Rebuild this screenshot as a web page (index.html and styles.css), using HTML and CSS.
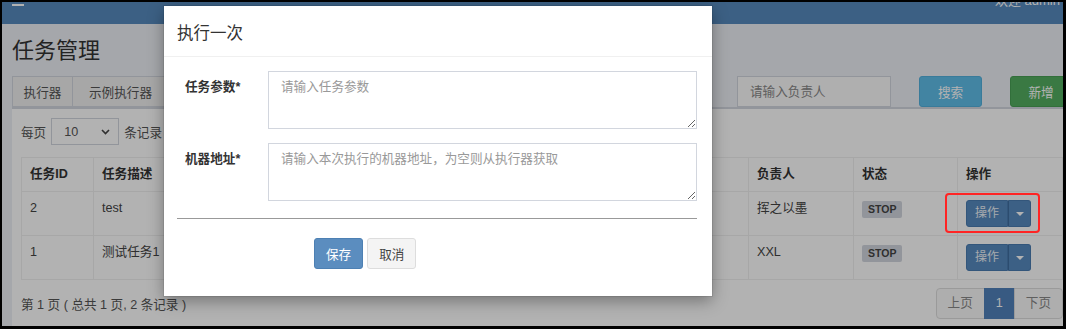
FILE: index.html
```html
<!DOCTYPE html>
<html lang="zh-CN">
<head>
  <meta charset="UTF-8">
  <title>任务管理</title>
  <link rel="stylesheet" href="styles.css">
</head>
<body>

<div class="screen">
  <div class="page">
    <header class="topbar">
      <span class="burger"><i></i><i></i><i></i></span>
      <span class="welcome">欢迎 admin</span>
    </header>

    <section class="content">
      <h1 class="page-title">任务管理</h1>

      <div class="filters">
        <div class="input-group">
          <span class="addon">执行器</span>
          <span class="group-select">示例执行器</span>
        </div>
        <div class="filter-right">
          <input class="text-input" type="text" placeholder="请输入负责人">
          <button class="btn btn-search">搜索</button>
          <button class="btn btn-add">新增</button>
        </div>
      </div>

      <div class="box">
        <div class="length-row">
          <span>每页</span>
          <span class="page-size">10
            <svg width="9" height="6" viewBox="0 0 9 6"><polyline points="1,1 4.5,4.5 8,1" fill="none" stroke="#444" stroke-width="1.6"/></svg>
          </span>
          <span>条记录</span>
        </div>

        <table class="job-table">
          <colgroup>
            <col style="width:72px">
            <col style="width:200px">
            <col style="width:220px">
            <col style="width:235px">
            <col style="width:105px">
            <col style="width:104px">
            <col>
          </colgroup>
          <thead>
            <tr>
              <th>任务ID</th>
              <th>任务描述</th>
              <th>Cron</th>
              <th>运行模式</th>
              <th>负责人</th>
              <th>状态</th>
              <th>操作</th>
            </tr>
          </thead>
          <tbody>
            <tr>
              <td>2</td>
              <td>test</td>
              <td></td>
              <td></td>
              <td>挥之以墨</td>
              <td><span class="label">STOP</span></td>
              <td>
                <div class="btn-group">
                  <button class="op">操作</button><button class="op op-caret"><span class="caret"></span></button>
                </div>
              </td>
            </tr>
            <tr>
              <td>1</td>
              <td>测试任务1</td>
              <td></td>
              <td></td>
              <td>XXL</td>
              <td><span class="label">STOP</span></td>
              <td>
                <div class="btn-group">
                  <button class="op">操作</button><button class="op op-caret"><span class="caret"></span></button>
                </div>
              </td>
            </tr>
          </tbody>
        </table>

        <div class="table-foot">
          <span>第 1 页 ( 总共 1 页, 2 条记录 )</span>
          <ul class="pager">
            <li class="disabled">上页</li>
            <li class="active">1</li>
            <li class="disabled">下页</li>
          </ul>
        </div>
      </div>
    </section>
  </div>

  <div class="backdrop"></div>
  <div class="mark"></div>

  <div class="modal">
    <div class="modal-header">
      <h4 class="modal-title">执行一次</h4>
    </div>
    <div class="modal-body">
      <form class="run-form">
        <div class="form-row">
          <label>任务参数*</label>
          <textarea placeholder="请输入任务参数"></textarea>
        </div>
        <div class="form-row">
          <label>机器地址*</label>
          <textarea placeholder="请输入本次执行的机器地址，为空则从执行器获取"></textarea>
        </div>
        <hr>
        <div class="form-actions">
          <button type="button" class="btn btn-primary">保存</button>
          <button type="button" class="btn btn-default">取消</button>
        </div>
      </form>
    </div>
  </div>
</div>

</body>
</html>
```

FILE: styles.css
```css
body {
  margin: 0;
  background-color: #000;
  font-family: "Liberation Sans", "Noto Sans CJK SC", sans-serif;
  font-size: 12.6px;
  color: #444;
}

.screen {
  position: relative;
  width: 1066px;
  height: 329px;
  box-sizing: border-box;
  border-style: solid;
  border-color: #000;
  border-width: 2px 3px 3px 2px;
  overflow: hidden;
  background-color: #ecf0f5;
}

.page {
  width: 1070px;
}

/* top bar, scrolled half out of view */
.topbar {
  height: 50px;
  margin-top: -28px;
  padding: 0 12px 0 10px;
  background-color: #578abe;
  color: #fff;
  display: flex;
  justify-content: space-between;
  align-items: center;
}

.burger {
  display: flex;
  flex-direction: column;
  gap: 4px;
  width: 12px;
}

.burger i {
  display: block;
  height: 2px;
  background-color: #fff;
}

.welcome {
  font-size: 13px;
}

.content {
  padding-left: 10px;
}

.page-title {
  margin: 12px 0 10px;
  font-size: 22px;
  line-height: 30px;
  font-weight: normal;
  color: #333;
}

.filters {
  display: flex;
  height: 31px;
}

.input-group {
  display: flex;
  width: 320px;
}

.addon, .group-select {
  display: flex;
  align-items: center;
  box-sizing: border-box;
  height: 31px;
  border: 1px solid #d2d6de;
  background-color: #f0f0f0;
  color: #555;
}

.addon {
  width: 61px;
  justify-content: center;
}

.group-select {
  flex: 1;
  border-left: none;
  padding-left: 16px;
}

.filter-right {
  margin-left: auto;
  display: flex;
  gap: 28px;
}

.text-input {
  box-sizing: border-box;
  width: 154px;
  height: 31px;
  border: 1px solid #d2d6de;
  background-color: #fbfbfb;
  padding: 0 12px;
  font: inherit;
}

.text-input::placeholder {
  color: #888;
}

.btn {
  box-sizing: border-box;
  height: 31px;
  padding: 0 11px;
  border: 1px solid transparent;
  border-radius: 3px;
  font: inherit;
  display: inline-flex;
  align-items: center;
  justify-content: center;
  cursor: pointer;
}

.btn-search {
  width: 63px;
  background-color: #5fbde9;
  border-color: #52b0dd;
  color: #fff;
}

.btn-add {
  width: 62px;
  background-color: #53ae60;
  border-color: #48a055;
  color: #fff;
}

.box {
  border-top: 2px solid #d2d6de;
  background-color: #fff;
  padding: 9px 0 9px 9px;
}

.length-row {
  display: flex;
  align-items: center;
  gap: 4px;
  height: 27px;
  color: #555;
}

.page-size {
  box-sizing: border-box;
  width: 68px;
  height: 27px;
  margin: 0 1px;
  padding: 0 8px 0 12px;
  border: 1px solid #d2d6de;
  display: flex;
  justify-content: space-between;
  align-items: center;
  color: #555;
}

.job-table {
  width: 1042px;
  margin-top: 12px;
  border-collapse: collapse;
  table-layout: fixed;
}

.job-table th, .job-table td {
  border: 1px solid #f0f0f0;
  padding: 8px;
  line-height: 17px;
  text-align: left;
  vertical-align: top;
  white-space: nowrap;
  overflow: hidden;
}

.job-table th {
  color: #333;
  font-weight: bold;
}

.label {
  display: inline-block;
  margin-top: 1px;
  height: 17px;
  line-height: 17px;
  padding: 0 6px;
  border-radius: 2px;
  background-color: #d2d6de;
  color: #444;
  font-size: 10.5px;
  font-weight: bold;
}

.btn-group {
  display: flex;
}

.op {
  height: 27px;
  padding: 0 8px;
  border: 1px solid #4a7bb0;
  background-color: #578abf;
  color: #eef3f8;
  font: inherit;
  font-size: 12px;
  border-radius: 3px 0 0 3px;
}

.op-caret {
  width: 23px;
  padding: 0;
  border-left-color: #3f6d9f;
  border-radius: 0 3px 3px 0;
}

.caret {
  display: inline-block;
  border-top: 4px solid #fff;
  border-left: 4px solid transparent;
  border-right: 4px solid transparent;
  vertical-align: middle;
}

.table-foot {
  display: flex;
  justify-content: space-between;
  align-items: center;
  width: 1042px;
  margin-top: 8px;
  color: #555;
}

.pager {
  display: flex;
  margin: 0;
  padding: 0;
  list-style: none;
}

.pager li {
  box-sizing: border-box;
  height: 31px;
  padding: 6px 11px;
  line-height: 17px;
  border: 1px solid #ddd;
  margin-left: -1px;
  background-color: #fafafa;
  color: #888;
}

.pager li:first-child {
  border-radius: 4px 0 0 4px;
}

.pager li:last-child {
  border-radius: 0 4px 4px 0;
}

.pager li.active {
  background-color: #5182ba;
  border-color: #5182ba;
  color: #fff;
}

/* modal */
.backdrop {
  position: absolute;
  inset: 0;
  background-color: rgba(0, 0, 0, 0.3);
}

.mark {
  position: absolute;
  left: 943px;
  top: 191px;
  width: 91px;
  height: 36px;
  border: 2px solid #ff2424;
  border-radius: 4px;
}

.modal {
  position: absolute;
  left: 162px;
  top: 4px;
  width: 548px;
  background-color: #fff;
  box-shadow: 0 0 0 1px rgba(0, 0, 0, 0.08), 0 5px 15px rgba(0, 0, 0, 0.35);
}

.modal-header {
  padding: 16px 13px 12px;
  border-bottom: 1px solid #f0f0f0;
}

.modal-title {
  margin: 0;
  font-size: 16.5px;
  line-height: 22px;
  font-weight: normal;
  color: #333;
}

.modal-body {
  padding: 14px 15px 27px 13px;
}

.form-row {
  display: grid;
  grid-template-columns: 91px 1fr;
  margin-bottom: 14px;
}

.form-row label {
  padding: 7px 0 0 8px;
  line-height: 18px;
  font-weight: bold;
  color: #333;
}

.form-row textarea {
  box-sizing: border-box;
  height: 58px;
  padding: 6px 12px;
  border: 1px solid #d2d6de;
  font: inherit;
  line-height: 18px;
  color: #555;
}

.form-row textarea::placeholder {
  color: #999;
}

.run-form hr {
  margin: 17px 0 19px;
  border: 0;
  border-top: 1px solid #999;
}

.form-row:last-of-type {
  margin-bottom: 0;
}

.form-actions {
  display: flex;
  gap: 4px;
  padding-left: 137px;
}

.btn-primary {
  background-color: #5b8dbf;
  border-color: #4d80b3;
  color: #fff;
}

.btn-default {
  background-color: #f4f4f4;
  border-color: #ddd;
  color: #444;
}
```
